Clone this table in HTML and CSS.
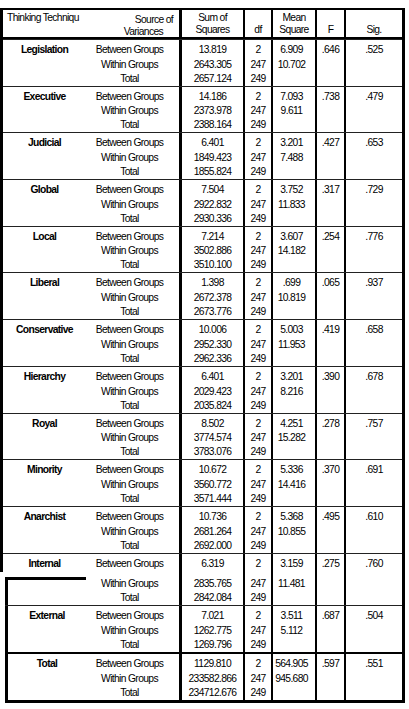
FILE: index.html
```html
<!DOCTYPE html>
<html lang="en">
<head>
  <meta charset="UTF-8" />
  <title>ANOVA - Thinking Techniques</title>
  <meta name="viewport" content="width=device-width, initial-scale=1.0" />
  <link rel="stylesheet" href="styles.css">
</head>
<body>

<div class="tbl top">
  <div class="row head">
    <div class="h1">Thinking Techniqu</div>
    <div class="h2">Source of<br><span class="vr">Variances</span></div>
    <div>Sum of<br>Squares</div>
    <div>df</div>
    <div>Mean<br>Square</div>
    <div>F</div>
    <div>Sig.</div>
  </div>

  <div class="grp">
    <div class="row r1"><div class="lbl">Legislation</div><div>Between Groups</div><div>13.819</div><div>2</div><div class="ms">6.909</div><div>.646</div><div>.525</div></div>
    <div class="row r2"><div></div><div>Within Groups</div><div>2643.305</div><div>247</div><div class="ms">10.702</div><div></div><div></div></div>
    <div class="row r3"><div></div><div>Total</div><div>2657.124</div><div>249</div><div></div><div></div><div></div></div>
  </div>

  <div class="grp">
    <div class="row r1"><div class="lbl">Executive</div><div>Between Groups</div><div>14.186</div><div>2</div><div class="ms">7.093</div><div>.738</div><div>.479</div></div>
    <div class="row r2"><div></div><div>Within Groups</div><div>2373.978</div><div>247</div><div class="ms">9.611</div><div></div><div></div></div>
    <div class="row r3"><div></div><div>Total</div><div>2388.164</div><div>249</div><div></div><div></div><div></div></div>
  </div>

  <div class="grp">
    <div class="row r1"><div class="lbl">Judicial</div><div>Between Groups</div><div>6.401</div><div>2</div><div class="ms">3.201</div><div>.427</div><div>.653</div></div>
    <div class="row r2"><div></div><div>Within Groups</div><div>1849.423</div><div>247</div><div class="ms">7.488</div><div></div><div></div></div>
    <div class="row r3"><div></div><div>Total</div><div>1855.824</div><div>249</div><div></div><div></div><div></div></div>
  </div>

  <div class="grp">
    <div class="row r1"><div class="lbl">Global</div><div>Between Groups</div><div>7.504</div><div>2</div><div class="ms">3.752</div><div>.317</div><div>.729</div></div>
    <div class="row r2"><div></div><div>Within Groups</div><div>2922.832</div><div>247</div><div class="ms">11.833</div><div></div><div></div></div>
    <div class="row r3"><div></div><div>Total</div><div>2930.336</div><div>249</div><div></div><div></div><div></div></div>
  </div>

  <div class="grp">
    <div class="row r1"><div class="lbl">Local</div><div>Between Groups</div><div>7.214</div><div>2</div><div class="ms">3.607</div><div>.254</div><div>.776</div></div>
    <div class="row r2"><div></div><div>Within Groups</div><div>3502.886</div><div>247</div><div class="ms">14.182</div><div></div><div></div></div>
    <div class="row r3"><div></div><div>Total</div><div>3510.100</div><div>249</div><div></div><div></div><div></div></div>
  </div>

  <div class="grp">
    <div class="row r1"><div class="lbl">Liberal</div><div>Between Groups</div><div>1.398</div><div>2</div><div class="ms">.699</div><div>.065</div><div>.937</div></div>
    <div class="row r2"><div></div><div>Within Groups</div><div>2672.378</div><div>247</div><div class="ms">10.819</div><div></div><div></div></div>
    <div class="row r3"><div></div><div>Total</div><div>2673.776</div><div>249</div><div></div><div></div><div></div></div>
  </div>

  <div class="grp">
    <div class="row r1"><div class="lbl">Conservative</div><div>Between Groups</div><div>10.006</div><div>2</div><div class="ms">5.003</div><div>.419</div><div>.658</div></div>
    <div class="row r2"><div></div><div>Within Groups</div><div>2952.330</div><div>247</div><div class="ms">11.953</div><div></div><div></div></div>
    <div class="row r3"><div></div><div>Total</div><div>2962.336</div><div>249</div><div></div><div></div><div></div></div>
  </div>

  <div class="grp">
    <div class="row r1"><div class="lbl">Hierarchy</div><div>Between Groups</div><div>6.401</div><div>2</div><div class="ms">3.201</div><div>.390</div><div>.678</div></div>
    <div class="row r2"><div></div><div>Within Groups</div><div>2029.423</div><div>247</div><div class="ms">8.216</div><div></div><div></div></div>
    <div class="row r3"><div></div><div>Total</div><div>2035.824</div><div>249</div><div></div><div></div><div></div></div>
  </div>

  <div class="grp">
    <div class="row r1"><div class="lbl">Royal</div><div>Between Groups</div><div>8.502</div><div>2</div><div class="ms">4.251</div><div>.278</div><div>.757</div></div>
    <div class="row r2"><div></div><div>Within Groups</div><div>3774.574</div><div>247</div><div class="ms">15.282</div><div></div><div></div></div>
    <div class="row r3"><div></div><div>Total</div><div>3783.076</div><div>249</div><div></div><div></div><div></div></div>
  </div>

  <div class="grp">
    <div class="row r1"><div class="lbl">Minority</div><div>Between Groups</div><div>10.672</div><div>2</div><div class="ms">5.336</div><div>.370</div><div>.691</div></div>
    <div class="row r2"><div></div><div>Within Groups</div><div>3560.772</div><div>247</div><div class="ms">14.416</div><div></div><div></div></div>
    <div class="row r3"><div></div><div>Total</div><div>3571.444</div><div>249</div><div></div><div></div><div></div></div>
  </div>

  <div class="grp">
    <div class="row r1"><div class="lbl">Anarchist</div><div>Between Groups</div><div>10.736</div><div>2</div><div class="ms">5.368</div><div>.495</div><div>.610</div></div>
    <div class="row r2"><div></div><div>Within Groups</div><div>2681.264</div><div>247</div><div class="ms">10.855</div><div></div><div></div></div>
    <div class="row r3"><div></div><div>Total</div><div>2692.000</div><div>249</div><div></div><div></div><div></div></div>
  </div>

  <div class="grp">
    <div class="row r1 last"><div class="lbl">Internal</div><div>Between Groups</div><div>6.319</div><div>2</div><div class="ms">3.159</div><div>.275</div><div>.760</div></div>
  </div>
</div>

<!-- second page of the scan, pasted slightly to the right -->
<div class="tbl low">
  <div class="row cont"><div class="brk"></div><div>Within Groups</div><div>2835.765</div><div>247</div><div class="ms">11.481</div><div></div><div></div></div>
  <div class="row r3"><div></div><div>Total</div><div>2842.084</div><div>249</div><div></div><div></div><div></div></div>

  <div class="grp">
    <div class="row r1"><div class="lbl">External</div><div>Between Groups</div><div>7.021</div><div>2</div><div class="ms">3.511</div><div>.687</div><div>.504</div></div>
    <div class="row r2"><div></div><div>Within Groups</div><div>1262.775</div><div>247</div><div class="ms">5.112</div><div></div><div></div></div>
    <div class="row r3"><div></div><div>Total</div><div>1269.796</div><div>249</div><div></div><div></div><div></div></div>
  </div>

  <div class="grp grand">
    <div class="row r1"><div class="lbl">Total</div><div>Between Groups</div><div>1129.810</div><div>2</div><div class="ms">564.905</div><div>.597</div><div>.551</div></div>
    <div class="row r2"><div></div><div>Within Groups</div><div>233582.866</div><div>247</div><div class="ms">945.680</div><div></div><div></div></div>
    <div class="row r3"><div></div><div>Total</div><div>234712.676</div><div>249</div><div></div><div></div><div></div></div>
  </div>
</div>

</body>
</html>
```

FILE: styles.css
```css
body {
  margin: 0;
  background: #fff;
  color: #000;
  font-family: "Liberation Sans", Arial, sans-serif;
  font-size: 10.3px;
  letter-spacing: -0.65px;
}

.tbl { box-sizing: border-box; border-right: 3px solid #000; }
.top {
  width: 405px;
  margin-top: 8px;
  border-top: 2px solid #000;
  border-left: 3px solid #000;
}
.low {
  width: 400px;
  margin-left: 5px;
  border-bottom: 3px solid #000;
}

.row {
  display: grid;
  grid-template-columns: 83px 93px 64px 28px 44px 29px 1fr;
}
.low .row { grid-template-columns: 81px 93px 64px 28px 44px 29px 1fr; }

.row > div {
  box-sizing: border-box;
  text-align: center;
  white-space: nowrap;
  overflow: hidden;
}
.row > div:nth-child(2) { padding-right: 6px; }
.row > div:nth-child(n+3) { border-left: 2px solid #000; }
.row > div:nth-child(3) { border-left-width: 3px; }
.row .ms { padding-right: 5px; }
.low .row > div:first-child { border-left: 3px solid #000; }

/* header */
.head { height: 27px; border-bottom: 2px solid #000; }
.head > div {
  display: flex;
  flex-direction: column;
  justify-content: flex-end;
  line-height: 12px;
  padding-bottom: 1px;
}
.head .h1 {
  justify-content: flex-start;
  text-align: left;
  padding: 2px 0 0 4px;
  overflow: visible;
}
.head .h2 {
  display: block;
  padding: 4px 13px 0 0;
  text-align: right;
}
.head .vr { margin-right: 10px; }

/* groups */
.grp { border-top: 1px solid #222; }
.grand { border-top-width: 2px; border-top-color: #000; }
.r1 { height: 16.7px; }
.r1 > div { padding-top: 3px; line-height: 13.7px; }
.r1.last { height: 18.7px; }
.r2 { height: 15px; line-height: 15px; }
.r3 { height: 14px; line-height: 14px; }
.lbl { font-weight: bold; }

.cont { height: 19px; }
.cont > div { padding-top: 4px; line-height: 15px; }
.low .cont .brk {
  margin-top: 5px;
  border-top: 3px solid #000;
}
```
